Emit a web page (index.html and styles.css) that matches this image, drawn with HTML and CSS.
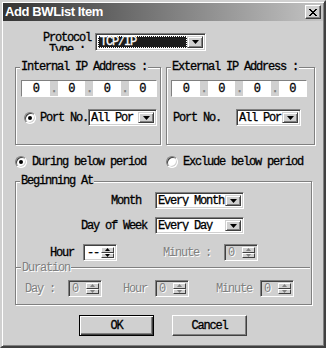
FILE: index.html
```html
<!DOCTYPE html>
<html>
<head>
<meta charset="utf-8">
<title>Add BWList Item</title>
<link rel="stylesheet" href="styles.css">
</head>
<body>
<div class="window">
  <div class="titlebar">
    <span class="title">Add BWList Item</span>
    <span class="close">
      <svg width="8" height="7" viewBox="0 0 8 7" fill="#000">
        <rect x="0" y="0" width="2" height="1"/><rect x="6" y="0" width="2" height="1"/>
        <rect x="1" y="1" width="2" height="1"/><rect x="5" y="1" width="2" height="1"/>
        <rect x="2" y="2" width="4" height="1"/>
        <rect x="3" y="3" width="2" height="1"/>
        <rect x="2" y="4" width="4" height="1"/>
        <rect x="1" y="5" width="2" height="1"/><rect x="5" y="5" width="2" height="1"/>
        <rect x="0" y="6" width="2" height="1"/><rect x="6" y="6" width="2" height="1"/>
      </svg>
    </span>
  </div>

  <div class="content">
    <div class="protocol-row">
      <div class="protocol-label">Protocol Type :</div>
      <div class="combo combo-protocol">
        <div class="combo-text"><span class="sel">TCP/IP</span></div>
        <div class="combo-btn"><svg width="7" height="4" viewBox="0 0 7 4"><path d="M0 0h7l-3.5 4z" fill="#000"/></svg></div>
      </div>
    </div>

    <div class="groups-row">
      <fieldset class="group group-internal">
        <legend>Internal IP Address :</legend>
        <div class="ip ip-internal">
          <span class="ip-seg">0</span><span class="ip-dot">.</span>
          <span class="ip-seg">0</span><span class="ip-dot">.</span>
          <span class="ip-seg">0</span><span class="ip-dot">.</span>
          <span class="ip-seg">0</span>
        </div>
        <div class="port-row port-internal">
          <span class="radio checked"></span>
          <span class="port-label">Port No.</span>
          <div class="combo combo-port">
            <div class="combo-text">All Por</div>
            <div class="combo-btn"><svg width="7" height="4" viewBox="0 0 7 4"><path d="M0 0h7l-3.5 4z" fill="#000"/></svg></div>
          </div>
        </div>
      </fieldset>

      <fieldset class="group group-external">
        <legend>External IP Address :</legend>
        <div class="ip ip-external">
          <span class="ip-seg">0</span><span class="ip-dot">.</span>
          <span class="ip-seg">0</span><span class="ip-dot">.</span>
          <span class="ip-seg">0</span><span class="ip-dot">.</span>
          <span class="ip-seg">0</span>
        </div>
        <div class="port-row port-external">
          <span class="port-label">Port No.</span>
          <div class="combo combo-port combo-port-ext">
            <div class="combo-text">All Por</div>
            <div class="combo-btn"><svg width="7" height="4" viewBox="0 0 7 4"><path d="M0 0h7l-3.5 4z" fill="#000"/></svg></div>
          </div>
        </div>
      </fieldset>
    </div>

    <div class="period-row">
      <div class="period-item period-during"><span class="radio checked"></span><span class="radio-label">During below period</span></div>
      <div class="period-item period-exclude"><span class="radio"></span><span class="radio-label">Exclude below period</span></div>
    </div>

    <fieldset class="group group-begin">
      <legend>Beginning At</legend>
      <div class="form-row row-month">
        <span class="row-label label-month">Month</span>
        <div class="combo combo-wide">
          <div class="combo-text">Every Month</div>
          <div class="combo-btn"><svg width="7" height="4" viewBox="0 0 7 4"><path d="M0 0h7l-3.5 4z" fill="#000"/></svg></div>
        </div>
      </div>
      <div class="form-row row-day">
        <span class="row-label label-day">Day of Week</span>
        <div class="combo combo-wide">
          <div class="combo-text">Every Day</div>
          <div class="combo-btn"><svg width="7" height="4" viewBox="0 0 7 4"><path d="M0 0h7l-3.5 4z" fill="#000"/></svg></div>
        </div>
      </div>
      <div class="form-row row-hour">
        <span class="row-label label-hour">Hour</span>
        <div class="spin spin-hour">
          <span class="spin-text">--</span>
          <span class="spin-btns">
            <span class="spin-b"><svg width="5" height="3" viewBox="0 0 5 3"><path d="M2.5 0l2.5 3h-5z" fill="#000"/></svg></span>
            <span class="spin-b"><svg width="5" height="3" viewBox="0 0 5 3"><path d="M0 0h5l-2.5 3z" fill="#000"/></svg></span>
          </span>
        </div>
        <span class="row-label disabled label-minute">Minute :</span>
        <div class="spin disabled spin-minute">
          <span class="spin-text">0</span>
          <span class="spin-btns">
            <span class="spin-b"><svg width="5" height="3" viewBox="0 0 5 3"><path d="M2.5 0l2.5 3h-5z" fill="#808080"/></svg></span>
            <span class="spin-b"><svg width="5" height="3" viewBox="0 0 5 3"><path d="M0 0h5l-2.5 3z" fill="#808080"/></svg></span>
          </span>
        </div>
      </div>

      <div class="dur-sep">
        <span class="dur-line dur-line-start"></span>
        <span class="dur-text disabled">Duration</span>
        <span class="dur-line dur-line-end"></span>
      </div>

      <div class="form-row row-duration">
        <span class="row-label disabled label-dday">Day :</span>
        <div class="spin disabled spin-dday">
          <span class="spin-text">0</span>
          <span class="spin-btns">
            <span class="spin-b"><svg width="5" height="3" viewBox="0 0 5 3"><path d="M2.5 0l2.5 3h-5z" fill="#808080"/></svg></span>
            <span class="spin-b"><svg width="5" height="3" viewBox="0 0 5 3"><path d="M0 0h5l-2.5 3z" fill="#808080"/></svg></span>
          </span>
        </div>
        <span class="row-label disabled label-dhour">Hour</span>
        <div class="spin disabled spin-dhour">
          <span class="spin-text">0</span>
          <span class="spin-btns">
            <span class="spin-b"><svg width="5" height="3" viewBox="0 0 5 3"><path d="M2.5 0l2.5 3h-5z" fill="#808080"/></svg></span>
            <span class="spin-b"><svg width="5" height="3" viewBox="0 0 5 3"><path d="M0 0h5l-2.5 3z" fill="#808080"/></svg></span>
          </span>
        </div>
        <span class="row-label disabled label-dminute">Minute</span>
        <div class="spin disabled spin-dminute">
          <span class="spin-text">0</span>
          <span class="spin-btns">
            <span class="spin-b"><svg width="5" height="3" viewBox="0 0 5 3"><path d="M2.5 0l2.5 3h-5z" fill="#808080"/></svg></span>
            <span class="spin-b"><svg width="5" height="3" viewBox="0 0 5 3"><path d="M0 0h5l-2.5 3z" fill="#808080"/></svg></span>
          </span>
        </div>
      </div>
    </fieldset>

    <div class="buttons">
      <div class="btn btn-default">OK</div>
      <div class="btn">Cancel</div>
    </div>
  </div>
</div>
</body>
</html>
```
FILE: styles.css
```css
* { box-sizing: border-box; }
html, body { margin: 0; padding: 0; background: #d0d0d0; }
body {
  font-family: "Liberation Mono", "Courier New", monospace;
  font-size: 12px;
  line-height: 12px;
  letter-spacing: -1.2px;
  color: #000;
  -webkit-text-stroke: 0.3px currentColor;
}

.window {
  width: 326px;
  height: 348px;
  background: #d0d0d0;
  border: 2px solid;
  border-color: #d0d0d0 #404040 #404040 #d0d0d0;
  padding: 1px;
  box-shadow: inset 1px 1px #fff, inset -1px -1px #808080;
}

/* title bar */
.titlebar {
  height: 18px;
  display: flex;
  align-items: center;
  justify-content: space-between;
  padding: 0 2px;
  background: linear-gradient(to right, #333333, #c4c4c4);
}
.title {
  font-family: "Liberation Sans", Arial, sans-serif;
  font-weight: bold;
  font-size: 13px;
  letter-spacing: -0.4px;
  color: #fff;
  -webkit-text-stroke: 0;
}
.close {
  width: 16px;
  height: 14px;
  display: flex;
  align-items: center;
  justify-content: center;
  background: #d0d0d0;
  border: 1px solid;
  border-color: #fff #404040 #404040 #fff;
  box-shadow: inset -1px -1px #808080;
}

.content { padding: 0 8px 0 12px; }

/* shared controls */
.combo {
  display: flex;
  background: #fff;
  border: 1px solid;
  border-color: #808080 #fff #fff #808080;
  box-shadow: inset 1px 1px #404040, inset -1px -1px #d0d0d0;
  padding: 2px;
}
.combo-text {
  flex: 1;
  min-width: 0;
  overflow: hidden;
  white-space: nowrap;
  padding-left: 0;
  display: flex;
  align-items: center;
}
.combo-btn {
  width: 16px;
  flex: none;
  display: flex;
  align-items: center;
  justify-content: center;
  background: #d0d0d0;
  border: 1px solid;
  border-color: #d0d0d0 #404040 #404040 #d0d0d0;
  box-shadow: inset 1px 1px #fff, inset -1px -1px #808080;
}

.radio {
  flex: none;
  width: 12px;
  height: 12px;
  border-radius: 50%;
  background: #fff;
  border: 1px solid;
  border-color: #808080 #fff #fff #808080;
  box-shadow: inset 1px 1px #404040, inset -1px -1px #d0d0d0;
  display: flex;
  align-items: center;
  justify-content: center;
}
.radio.checked::after {
  content: "";
  width: 4px;
  height: 4px;
  border-radius: 50%;
  background: #000;
}

.disabled { color: #808080; text-shadow: 1px 1px 0 #fff; -webkit-text-stroke: 0; }

.group {
  margin: 0;
  padding: 0 0 18px 0;
  min-width: 0;
  border: 1px solid #808080;
  box-shadow: inset 1px 1px #fff, 1px 1px #fff;
}
.group legend {
  margin-left: 4px;
  padding: 0 1px;
  line-height: 12px;
  background: #d0d0d0;
}

/* protocol */
.protocol-row {
  display: flex;
  align-items: flex-start;
  margin-top: 9px;
  padding-left: 25px;
}
.protocol-label {
  width: 54px;
  height: 21px;
  overflow: hidden;
  text-align: center;
  padding-top: 2px;
}
.combo-protocol {
  width: 111px;
  height: 18px;
  margin-left: 1px;
  margin-top: 3px;
}
.sel {
  display: flex;
  align-items: center;
  width: 100%;
  height: 100%;
  padding-left: 2px;
  background: #1c1c1c;
  color: #fff;
  outline: 1px dotted #fff;
  outline-offset: -1px;
}

/* IP groups */
.groups-row {
  display: flex;
  gap: 5px;
  margin-top: 10px;
}
.group-internal { width: 146px; flex: none; }
.group-external { flex: 1; }

.ip {
  display: flex;
  width: 136px;
  height: 17px;
  margin-top: 7px;
  border: 1px solid;
  border-color: #808080 #fff #fff #808080;
  background: #d0d0d0;
}
.ip-internal { margin-left: 5px; }
.ip-external { margin-left: 4px; }
.ip-seg {
  flex: 1;
  background: #fff;
  display: flex;
  align-items: center;
  justify-content: center;
}
.ip-dot {
  width: 8px;
  flex: none;
  display: flex;
  align-items: flex-end;
  justify-content: center;
  color: #808080;
  padding-bottom: 1px;
}

.port-row {
  display: flex;
  align-items: center;
  margin-top: 12px;
}
.port-internal .radio { margin-left: 8px; }
.port-internal .port-label { margin-left: 4px; width: 48px; }
.combo-port { width: 69px; height: 17px; }
.port-external .port-label { margin-left: 6px; width: 48px; }
.combo-port-ext { width: 65px; margin-left: 15px; }

/* period radios */
.period-row {
  display: flex;
  align-items: center;
  margin-top: 11px;
}
.period-item { display: flex; align-items: center; }
.period-during { width: 151px; }
.radio-label { margin-left: 5px; }

/* Beginning at */
.group-begin {
  margin-top: 7px;
  margin-right: 3px;
  padding-bottom: 7px;
}
.form-row { display: flex; align-items: center; }
.row-month { margin-top: 5px; }
.row-day { margin-top: 8px; }
.row-hour { margin-top: 10px; }
.label-month { width: 125px; text-align: right; }
.label-day { width: 131px; text-align: right; }
.row-month .combo-wide { margin-left: 14px; }
.row-day .combo-wide { margin-left: 8px; }
.combo-wide { width: 89px; height: 17px; }

.spin {
  display: flex;
  width: 34px;
  height: 17px;
  flex: none;
  background: #fff;
  border: 1px solid;
  border-color: #808080 #fff #fff #808080;
  box-shadow: inset 1px 1px #404040, inset -1px -1px #d0d0d0;
  padding: 2px;
}
.spin.disabled { background: #d0d0d0; }
.spin-text {
  flex: 1;
  display: flex;
  align-items: center;
  padding-left: 1px;
}
.spin-btns {
  width: 13px;
  flex: none;
  display: flex;
  flex-direction: column;
}
.spin-b {
  flex: 1;
  display: flex;
  align-items: center;
  justify-content: center;
  background: #d0d0d0;
  border: 1px solid;
  border-color: #fff #404040 #404040 #fff;
}

.label-hour { margin-left: 34px; width: 24px; }
.spin-hour { margin-left: 9px; }
.label-minute { margin-left: 46px; width: 48px; }
.spin-minute { margin-left: 13px; }

.dur-sep {
  display: flex;
  align-items: center;
  height: 12px;
  margin: 1px 1px 0 0;
}
.dur-line {
  height: 2px;
  border-top: 1px solid #808080;
  border-bottom: 1px solid #fff;
}
.dur-line-start { width: 5px; }
.dur-line-end { flex: 1; }
.dur-text { padding: 0 1px; }

.row-duration { margin-top: 6px; }
.label-dday { margin-left: 9px; width: 30px; }
.spin-dday { margin-left: 13px; }
.label-dhour { margin-left: 21px; width: 24px; }
.spin-dhour { margin-left: 8px; }
.label-dminute { margin-left: 27px; width: 36px; }
.spin-dminute { margin-left: 8px; }

/* buttons */
.buttons {
  display: flex;
  justify-content: center;
  gap: 18px;
  margin-top: 10px;
  padding-right: 4px;
}
.btn {
  width: 75px;
  height: 21px;
  display: flex;
  align-items: center;
  justify-content: center;
  background: #d0d0d0;
  border: 1px solid;
  border-color: #fff #404040 #404040 #fff;
  box-shadow: inset -1px -1px #808080;
}
.btn-default {
  border: 1px solid #000;
  box-shadow: inset 1px 1px #fff, inset -1px -1px #404040, inset -2px -2px #808080;
}
```
